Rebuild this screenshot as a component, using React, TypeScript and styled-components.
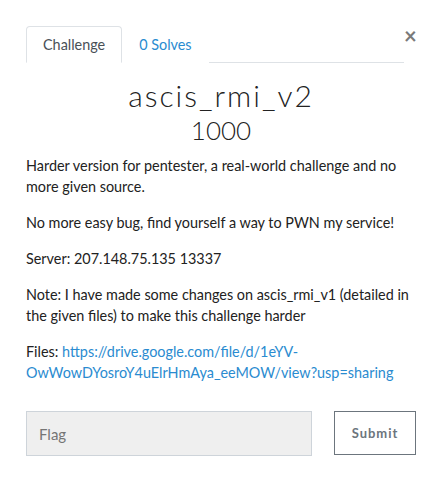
import React, { useState } from 'react';
import styled, { createGlobalStyle } from 'styled-components';

const GlobalStyle = createGlobalStyle`
  body {
    margin: 0;
    background: #ffffff;
    font-family: Lato, 'Open Sans', sans-serif;
    color: #212529;
  }
`;

type TabType = { label: string, active: boolean };

const tabs: TabType[] = [
  { label: 'Challenge', active: true },
  { label: '0 Solves', active: false },
];

export default function App() {
  const [flag, setFlag] = useState('');

  return (
    <Modal>
      <GlobalStyle />
      <Header>
        <Tabs>
          {tabs.map((tab, i) => (
            <Tab key={i} active={tab.active}>{tab.label}</Tab>
          ))}
        </Tabs>
        <Close aria-label="Close">&times;</Close>
      </Header>
      <Title>ascis_rmi_v2</Title>
      <Value>1000</Value>
      <Description>
        <p>Harder version for pentester, a real-world challenge and no more given source.</p>
        <p>No more easy bug, find yourself a way to PWN my service!</p>
        <p>Server: 207.148.75.135 13337</p>
        <p>Note: I have made some changes on ascis_rmi_v1 (detailed in the given files) to make this challenge harder</p>
        <p>
          Files: <a href="#">https://drive.google.com/file/d/1eYV-OwWowDYosroY4uElrHmAya_eeMOW/view?usp=sharing</a>
        </p>
      </Description>
      <SubmitRow>
        <FlagInput
          placeholder="Flag"
          value={flag}
          onChange={(e) => setFlag(e.target.value)}
        />
        <SubmitButton>Submit</SubmitButton>
      </SubmitRow>
    </Modal>
  );
}

const Modal = styled.div`
  width: 390px;
  padding: 26px 25px 30px 26px;
`;

const Header = styled.div`
  display: flex;
  align-items: flex-start;
`;

const Tabs = styled.div`
  flex: 1;
  display: flex;
  border-bottom: 1px solid #dee2e6;
`;

const Tab = styled.div<{ active: boolean }>`
  padding: 7px 16px 7px;
  margin-bottom: -1px;
  font-size: 14.4px;
  line-height: 21px;
  border: 1px solid ${(props) => props.active ? '#dee2e6' : 'transparent'};
  border-bottom-color: ${(props) => props.active ? '#ffffff' : 'transparent'};
  border-radius: 4px 4px 0 0;
  background: #ffffff;
  color: ${(props) => props.active ? '#495057' : '#2a8bd0'};
  cursor: pointer;
`;

const Close = styled.div`
  width: 12px;
  margin-top: 0;
  text-align: right;
  font-size: 22px;
  font-weight: 700;
  line-height: 20px;
  color: #7a7a7a;
  cursor: pointer;
`;

const Title = styled.h3`
  margin: 14px 0 0;
  text-align: center;
  font-size: 30px;
  font-weight: 300;
  letter-spacing: 2px;
  line-height: 36px;
  color: #222;
`;

const Value = styled.h4`
  margin: 0 0 8px;
  text-align: center;
  font-size: 26px;
  font-weight: 300;
  line-height: 34px;
  color: #222;
`;

const Description = styled.div`
  font-size: 14.4px;
  line-height: 21px;
  color: #222;

  p {
    margin: 0 0 15px;
  }

  a {
    color: #2a8bd0;
    text-decoration: none;
  }
`;

const SubmitRow = styled.div`
  display: flex;
  gap: 22px;
  margin-top: 28px;
`;

const FlagInput = styled.input`
  flex: 1;
  height: 45px;
  box-sizing: border-box;
  padding: 0 12px;
  border: 1px solid #ced4da;
  background: #efefef;
  font-family: Lato, sans-serif;
  font-size: 15px;
  color: #495057;
  outline: none;

  ::placeholder {
    color: #7a8288;
  }
`;

const SubmitButton = styled.button`
  width: 82px;
  height: 44px;
  box-sizing: border-box;
  border: 1px solid #6c757d;
  background: #ffffff;
  font-family: Lato, sans-serif;
  font-size: 13px;
  font-weight: 700;
  letter-spacing: 1px;
  color: #6c757d;
  cursor: pointer;
`;
